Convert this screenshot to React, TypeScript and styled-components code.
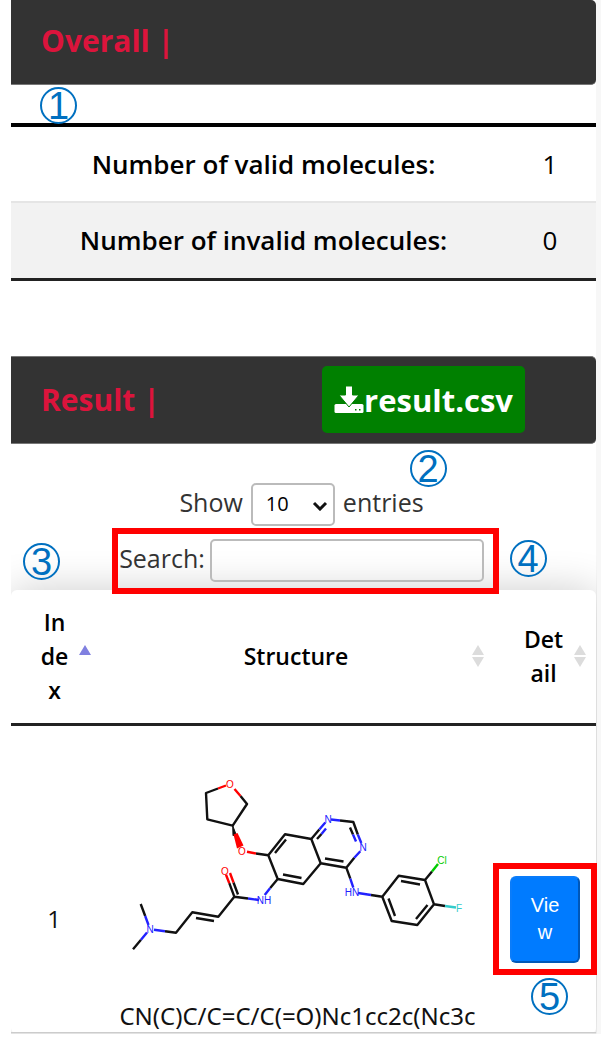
import React, { useState } from "react";
import styled, { createGlobalStyle } from "styled-components";

const GlobalStyle = createGlobalStyle`
  *, *::before, *::after { box-sizing: border-box; }
  body {
    margin: 0;
    background: #fff;
    color: #212529;
    font-family: "Open Sans", "Noto Sans", sans-serif;
    font-size: 24px;
    line-height: 34px;
  }
`;

const Page = styled.main`
  margin-left: 11px;
  border-right: 5px solid #f7f7f7;
`;

const SectionBar = styled.header<{ $first?: boolean }>`
  display: flex;
  align-items: center;
  justify-content: space-between;
  height: ${(p) => (p.$first ? 85 : 88)}px;
  padding: ${(p) => (p.$first ? "0 71px 2px 30px" : "0 71px 0 30px")};
  background: #333;
  border: solid #777;
  border-width: ${(p) => (p.$first ? "0 0 1px" : "1px 0")};
  border-radius: 0 5px 5px 0;
`;

const SectionTitle = styled.h2`
  margin: 0;
  color: #dc143c;
  font-size: 30px;
  line-height: 44px;
  font-weight: 700;
`;

const Overview = styled.section`
  position: relative;
  padding-bottom: 75px;
`;

const SummaryTable = styled.table`
  width: 100%;
  margin-top: 38px;
  table-layout: fixed;
  border-collapse: collapse;
  border-top: 4px solid #000;
  border-bottom: 3px solid #222;
  font-size: 26px;
  color: #000;
  text-align: center;
`;

const SummaryRow = styled.tr<{ $striped?: boolean }>`
  height: 77px;
  background: ${(p) => (p.$striped ? "#f2f2f2" : "#fff")};
  border-top: ${(p) => (p.$striped ? "2px solid #e5e5e5" : "0")};
`;

const SummaryLabel = styled.th`
  padding: 0 4px 0 0;
  font-weight: 600;
`;

const SummaryValue = styled.td`
  width: 76px;
  padding: 0 16px 0 0;
`;

const Results = styled.section`
  position: relative;
  clip-path: inset(0 -1px 0 0);
`;

const DownloadButton = styled.button`
  display: flex;
  align-items: center;
  height: 67px;
  padding: 0 12px;
  border: 0;
  border-radius: 5px;
  background: #008000;
  color: #fff;
  font: 700 31px/40px "Open Sans", "Noto Sans", sans-serif;
  cursor: pointer;
`;

const LengthRow = styled.label`
  display: flex;
  align-items: flex-start;
  justify-content: center;
  gap: 8px;
  margin-top: 39px;
  padding-right: 4px;
  font-size: 25px;
  line-height: 38px;
  color: #333;
`;

const SelectBox = styled.span`
  position: relative;
  display: flex;
`;

const LengthSelect = styled.select`
  width: 84px;
  height: 43px;
  padding: 0 13px;
  appearance: none;
  border: 2px solid #bbb;
  border-radius: 5px;
  background: #fff;
  color: #000;
  font: 20px/30px "Open Sans", "Noto Sans", sans-serif;
`;

const SelectArrow = styled.svg`
  position: absolute;
  top: 18px;
  right: 7px;
  pointer-events: none;
`;

const FilterRow = styled.div`
  display: flex;
  justify-content: center;
  margin: 2px 0 -4px;
  padding-left: 4px;
`;

const Highlight = styled.div`
  position: relative;
  z-index: 1;
  border: 6px solid #f00;
`;

const SearchFrame = styled(Highlight)`
  padding: 5px 9px 6px 1px;
`;

const SearchLabel = styled.label`
  display: flex;
  align-items: flex-start;
  gap: 5px;
  font-size: 25px;
  line-height: 38px;
  color: #333;
`;

const SearchInput = styled.input`
  width: 274px;
  height: 43px;
  padding: 5px;
  border: 2px solid #bbb;
  border-radius: 5px;
  background: transparent;
  font: inherit;
`;

const ResultTable = styled.table`
  width: 100%;
  table-layout: fixed;
  border-spacing: 0;
  border-radius: 6px;
  background: #fff;
  box-shadow: 0 0 40px rgba(0, 0, 0, 0.2);
  text-align: center;
`;

const HeadCell = styled.th<{ $width?: number }>`
  width: ${(p) => (p.$width ? `${p.$width}px` : "auto")};
  height: 136px;
  padding: 0 10px 0 27px;
  border-bottom: 3px solid #222;
  color: #000;
  font-size: 23px;
  font-weight: 600;
`;

const HeadContent = styled.div`
  display: flex;
  align-items: center;
  gap: 8px;
`;

const HeadLabel = styled.span`
  flex: 1;
  min-width: 0;
  word-break: break-all;
`;

const Cell = styled.td<{ $offset?: boolean }>`
  padding: ${(p) => (p.$offset ? "80px 0 0" : "24px 0 0")};
  border-bottom: 2px solid #ccc;
  color: #111;
`;

const IndexCell = styled(Cell)`
  padding-right: 4px;
`;

const Molecule = styled.svg`
  display: block;
  margin: 0 auto;
`;

const Smiles = styled.div`
  height: 32px;
  font-family: "Noto Sans", "Open Sans", sans-serif;
  line-height: 32px;
  overflow: hidden;
`;

const ViewFrame = styled(Highlight)`
  margin: 0 -1px;
  padding: 7px 11px 6px;
`;

const ViewButton = styled.button`
  display: block;
  width: 100%;
  height: 87px;
  padding: 0 15px;
  border: 2px solid;
  border-color: #0a7cfa #0057b8 #0057b8 #0a7cfa;
  border-radius: 6px;
  background: #007bff;
  color: #fff;
  font: 20px/27px "Liberation Sans", Arial, sans-serif;
  word-break: break-all;
  cursor: pointer;
`;

const Marker = styled.span<{ $top: number; $left: string }>`
  position: absolute;
  z-index: 2;
  top: ${(p) => p.$top}px;
  left: ${(p) => p.$left};
  width: 37px;
  height: 37px;
  border: 2px solid #0070c0;
  border-radius: 50%;
  color: #0070c0;
  font: 38px/34px "Liberation Sans", Arial, sans-serif;
  display: flex;
  justify-content: center;
`;

type Sort = "ascending" | "none";

function SortIcon({ sort }: { sort: Sort }) {
  return (
    <svg width="12" height="24" viewBox="0 0 12 24" aria-hidden="true">
      <path d="M0 11 6 1l6 10z" fill={sort === "ascending" ? "#8080e0" : "#dcdcdc"} />
      {sort === "none" && <path d="M0 13h12L6 23z" fill="#dcdcdc" />}
    </svg>
  );
}

function HeaderCell({ label, sort, width }: { label: string; sort: Sort; width?: number }) {
  return (
    <HeadCell scope="col" aria-sort={sort} $width={width}>
      <HeadContent>
        <HeadLabel>{label}</HeadLabel>
        <SortIcon sort={sort} />
      </HeadContent>
    </HeadCell>
  );
}

function DownloadIcon() {
  return (
    <svg width="30" height="28" viewBox="0 0 30 28" aria-hidden="true">
      <path d="M2 18h26q1.500 0 1.500 1.500v6q0 1.500-1.500 1.500H2q-1.500 0-1.500-1.500v-6Q.5 18 2 18z" fill="#fff" />
      <path d="M11.500 0h7v9h6.500L15 21 5 9h6.500z" fill="#fff" stroke="#008000" strokeWidth="1" />
      <path d="M21 23h1.500v1.500H21zM25 23h1.500v1.500H25z" fill="#008000" />
    </svg>
  );
}

const BLACK = "#111";
const RED = "#f00";
const BLUE = "#22f";

const bonds: { d: string; color: string }[] = [
  {
    color: BLACK,
    d: `M218 788.500 206 793l1.300 26.300 25.400 6.400L247 804l-6.500-8
      M256 853.500l12.300 1.800L285 834.300l26.300 4.700 9.400 24.300L303.300 884l-25.600-5-9.400-23.700
      M275 853l11-13.500M283 874.500l18.500 3.500M277.700 879l-7.500 9
      M311.300 839l8-9.500M317 839l4.500-5M340 820.500l13.300 1.500 4.500 12.500M350 827.500l3 7
      M320.700 863.300l25.600 4.400 8-10M325 858.500l18.500 3M346.300 867.700l4 11
      M371 895l11.300 1.700 16.400-21 26.300 4.300 9 24.300-16.700 20.700-25.600-4-9.400-24.300
      M401 881l19 3.500M427.500 905l-11.500 14M395 916l-6.500-17.500M425 880l7-8.500M434 904.300l11 1.700
      M234.300 896.700l-5-13.500M238 894.500l-4.500-12M248 898.500l-13.700-1.800-16 20-26-4.400L176 932.700l-11-1.500
      M196 918l18 3M140.700 904l4.500 12M133 949.300l8-9.500`,
  },
  { color: RED, d: "M218 788.500l8-3M240.500 796l-6-7M247 851.700l9 1.800M229.300 883.200l-3.300-8.500M233.500 882.500l-3.500-9.500" },
  {
    color: BLUE,
    d: `M270.200 888l-5.500 7M248 898.500l11 1.500M165 931.200l-11-1.500M145.200 916l3.300 9M141 939.800l6-7.300
      M319.300 829.500l6-7M321.500 834l4.500-5.500M340 820.500l-9-1M357.800 834.500l3.500 8.500M353 834.500l3 7
      M354.300 857.700l6-6.500M350.300 878.700l3 9M371 895l-13-2`,
  },
  { color: "#0c0", d: "M432 871.500l6-7.500" },
  { color: "#3cc", d: "M445 906l11 1.500" },
];

const atoms: { x: number; y: number; label: string; color: string }[] = [
  { x: 230, y: 788, label: "O", color: RED },
  { x: 242, y: 855, label: "O", color: RED },
  { x: 225, y: 875, label: "O", color: RED },
  { x: 264, y: 904, label: "NH", color: BLUE },
  { x: 150, y: 933, label: "N", color: BLUE },
  { x: 328, y: 823, label: "N", color: BLUE },
  { x: 363, y: 851, label: "N", color: BLUE },
  { x: 352, y: 896, label: "HN", color: BLUE },
  { x: 442, y: 864, label: "Cl", color: "#0c0" },
  { x: 459, y: 912, label: "F", color: "#3cc" },
];

function MoleculeDrawing() {
  return (
    <Molecule width="362" height="250" viewBox="117 750 362 250" role="img" aria-label="Molecule structure">
      {bonds.map((b) => (
        <path key={b.color} d={b.d} fill="none" stroke={b.color} strokeWidth="2.400" strokeLinejoin="round" />
      ))}
      <path d="M232.700 825.700l3.300 8.500 -3 1.500z" fill={BLACK} stroke={BLACK} />
      <path d="M233.500 834.500l4-1.500 6 12.500-6.500 3z" fill={RED} />
      {atoms.map((a) => (
        <text
          key={`${a.x}-${a.y}`}
          x={a.x}
          y={a.y}
          fill={a.color}
          fontFamily="Liberation Sans, Arial, sans-serif"
          fontSize="10"
          textAnchor="middle"
        >
          {a.label}
        </text>
      ))}
    </Molecule>
  );
}

export default function App() {
  const [length, setLength] = useState("10");
  const [query, setQuery] = useState("");

  return (
    <>
      <GlobalStyle />
      <Page>
        <Overview>
          <SectionBar $first>
            <SectionTitle>Overall |</SectionTitle>
          </SectionBar>
          <Marker $top={87} $left="29px">1</Marker>
          <SummaryTable>
            <tbody>
              <SummaryRow>
                <SummaryLabel scope="row">Number of valid molecules:</SummaryLabel>
                <SummaryValue>1</SummaryValue>
              </SummaryRow>
              <SummaryRow $striped>
                <SummaryLabel scope="row">Number of invalid molecules:</SummaryLabel>
                <SummaryValue>0</SummaryValue>
              </SummaryRow>
            </tbody>
          </SummaryTable>
        </Overview>

        <Results>
          <SectionBar>
            <SectionTitle>Result |</SectionTitle>
            <DownloadButton type="button">
              <DownloadIcon />
              result.csv
            </DownloadButton>
          </SectionBar>
          <Marker $top={94} $left="calc(50% + 106px)">2</Marker>

          <LengthRow>
            Show
            <SelectBox>
              <LengthSelect value={length} onChange={(e) => setLength(e.target.value)}>
                <option>10</option>
                <option>25</option>
                <option>50</option>
                <option>100</option>
              </LengthSelect>
              <SelectArrow width="16" height="10" viewBox="0 0 16 10" aria-hidden="true">
                <path d="M2 2l6 6 6-6" fill="none" stroke="#111" strokeWidth="3" />
              </SelectArrow>
            </SelectBox>
            entries
          </LengthRow>

          <FilterRow>
            <SearchFrame>
              <SearchLabel>
                Search:
                <SearchInput type="search" value={query} onChange={(e) => setQuery(e.target.value)} />
              </SearchLabel>
            </SearchFrame>
          </FilterRow>
          <Marker $top={187} $left="12px">3</Marker>
          <Marker $top={184} $left="calc(50% + 206px)">4</Marker>

          <ResultTable>
            <thead>
              <tr>
                <HeaderCell label="Index" sort="ascending" width={90} />
                <HeaderCell label="Structure" sort="none" />
                <HeaderCell label="Detail" sort="none" width={102} />
              </tr>
            </thead>
            <tbody>
              <tr>
                <IndexCell $offset>1</IndexCell>
                <Cell>
                  <MoleculeDrawing />
                  <Smiles>CN(C)C/C=C/C(=O)Nc1cc2c(Nc3c</Smiles>
                </Cell>
                <Cell $offset>
                  <ViewFrame>
                    <ViewButton type="button">View</ViewButton>
                    <Marker $top={109} $left="calc(50% - 14px)">5</Marker>
                  </ViewFrame>
                </Cell>
              </tr>
            </tbody>
          </ResultTable>
        </Results>
      </Page>
    </>
  );
}
